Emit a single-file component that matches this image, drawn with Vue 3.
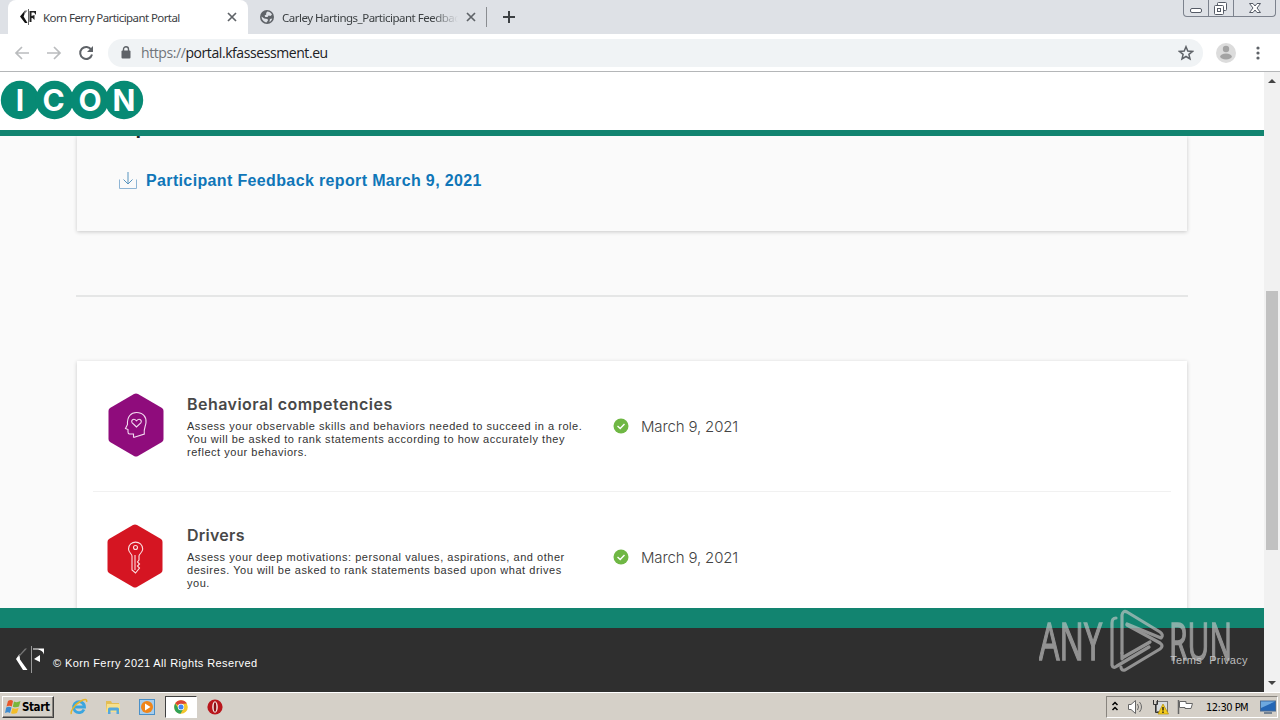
<template>
  <div class="screen">
    <!-- Tab strip -->
    <div class="tab-strip">
      <div class="tab active">
        <svg class="favicon" width="17" height="16" viewBox="0 0 17 16">
          <path d="M5 1.5L0 7.5L5 14H7.500L3.6 7.500L4.500 5Z" fill="#111" />
          <path d="M5 1.500L7.500 1.500L4 5.500Z" fill="#777" />
          <path d="M8.500 0V16" stroke="#666" stroke-width="1" />
          <path d="M9.500 2H16V6L14 3.500H11.500V7L14.500 6V11L12.500 9H11.500V13H9.500Z" fill="#222" />
        </svg>
        <span class="tab-title first">Korn Ferry Participant Portal</span>
        <svg class="tab-close" width="10" height="10" viewBox="0 0 10 10">
          <path d="M1 1L9 9M9 1L1 9" stroke="#5f6368" stroke-width="1.7" />
        </svg>
      </div>
      <div class="tab">
        <svg class="favicon globe" width="14" height="14" viewBox="0 0 14 14">
          <circle cx="7" cy="7" r="7" fill="#5f6368" />
          <path
            d="M7.4 1.6C9 1.6 11 2.6 12 4.5L10.5 6L8.6 5.6L7.6 7H5.3L4.6 5.4L6.3 4.4L6.1 2.9ZM1.6 6.6L4.2 8.6L7.5 9L8 10.5L6.4 12.4C4 12.2 1.5 10 1.6 6.6ZM10 9L12.2 8.4C11.8 10 10.9 11.2 9.4 12Z"
            fill="#dee1e6"
          />
        </svg>
        <span class="tab-title second">Carley Hartings_Participant Feedbac</span>
        <svg class="tab-close" width="10" height="10" viewBox="0 0 10 10">
          <path d="M1 1L9 9M9 1L1 9" stroke="#5f6368" stroke-width="1.7" />
        </svg>
      </div>
      <span class="tab-separator"></span>
      <svg class="new-tab" width="12" height="12" viewBox="0 0 12 12">
        <path d="M6 0V12M0 6H12" stroke="#3c4043" stroke-width="2" />
      </svg>
      <div class="window-buttons">
        <span class="window-button">
          <svg width="24" height="16" viewBox="0 0 24 16">
            <rect x="6.5" y="8.5" width="11" height="4" rx="1.5" fill="#fff" stroke="#555b66" />
          </svg>
        </span>
        <span class="window-button">
          <svg width="24" height="16" viewBox="0 0 24 16">
            <rect x="8.5" y="2.5" width="9" height="8" rx="1" fill="#fff" stroke="#555b66" />
            <rect x="5.5" y="5.5" width="9" height="9" rx="1" fill="#fff" stroke="#555b66" />
            <rect x="8.5" y="8.5" width="3" height="3" fill="#fff" stroke="#555b66" />
          </svg>
        </span>
        <span class="window-button">
          <svg width="41" height="16" viewBox="0 0 41 16">
            <path
              d="M15.5 3.5H19L21 6L23 3.5H26.5L23 8L26.5 12.5H23L21 10L19 12.5H15.5L19 8Z"
              fill="#fff"
              stroke="#555b66"
            />
          </svg>
        </span>
      </div>
    </div>

    <!-- Toolbar -->
    <div class="toolbar">
      <svg class="nav-icon" width="16" height="16" viewBox="0 0 16 16">
        <path d="M15 8H2M8 2L2 8L8 14" fill="none" stroke="#babcbe" stroke-width="1.7" />
      </svg>
      <svg class="nav-icon" width="16" height="16" viewBox="0 0 16 16">
        <path d="M1 8H14M8 2L14 8L8 14" fill="none" stroke="#babcbe" stroke-width="1.7" />
      </svg>
      <svg class="nav-icon" width="16" height="16" viewBox="0 0 16 16">
        <path
          d="M13.3 4.8A6 6 0 1 0 14 9.5"
          fill="none"
          stroke="#5f6368"
          stroke-width="2"
        />
        <path d="M15 1V7H9Z" fill="#5f6368" />
      </svg>
      <div class="address-bar">
        <svg width="10" height="13" viewBox="0 0 10 13">
          <rect x="0.5" y="4.5" width="9" height="8" rx="1" fill="#5f6368" />
          <path d="M2.5 5V3.2A2.5 2.5 0 0 1 7.5 3.2V5" fill="none" stroke="#5f6368" stroke-width="1.4" />
        </svg>
        <span class="url"><span class="scheme">https://</span>portal.kfassessment.eu</span>
        <svg class="star" width="16" height="16" viewBox="0 0 16 16">
          <path
            d="M8 1.7L9.8 6L14.5 6.4L10.9 9.4L12 14L8 11.5L4 14L5.1 9.4L1.5 6.4L6.2 6Z"
            fill="none"
            stroke="#5f6368"
            stroke-width="1.5"
          />
        </svg>
      </div>
      <svg class="avatar" width="20" height="20" viewBox="0 0 20 20">
        <circle cx="10" cy="10" r="10" fill="#dcdcdc" />
        <circle cx="10" cy="6" r="3.2" fill="#a3a3a3" />
        <ellipse cx="10" cy="13.5" rx="5.8" ry="3" fill="#a3a3a3" />
      </svg>
      <svg class="kebab" width="4" height="14" viewBox="0 0 4 14">
        <circle v-for="cy in [2, 7, 12]" :key="cy" cx="2" :cy="cy" r="1.6" fill="#5f6368" />
      </svg>
    </div>

    <!-- Page -->
    <div class="viewport">
      <div class="page">
        <header class="site-header">
          <svg width="144" height="40" viewBox="0 0 144 40">
            <g fill="#078a74">
              <circle v-for="l in logoLetters" :key="l.char" :cx="l.x" cy="20" r="19.2" />
            </g>
            <g class="logo-text">
              <text v-for="l in logoLetters" :key="l.char" :x="l.x + l.dx" y="31">{{ l.char }}</text>
            </g>
          </svg>
        </header>

        <main class="content">
          <section class="card report-card">
            <h2 class="report-heading">Reports</h2>
            <a class="report-link">
              <svg width="18" height="18" viewBox="0 0 18 18">
                <path d="M0.5 7.5V16.5H17.5V7.5" fill="none" stroke="#8fb5d5" />
                <path d="M9 0V11.5M4.5 7.5L9 12L13.5 7.5" fill="none" stroke="#5794bf" />
              </svg>
              <span>Participant Feedback report March 9, 2021</span>
            </a>
          </section>
          <hr class="rule" />
          <section class="card assessments">
            <div v-for="item in assessments" :key="item.title" class="assessment">
              <svg class="hexagon" :class="item.icon" width="56" height="64" viewBox="0 0 56 64">
                <path
                  d="M26 1.1Q28 0 30 1.1L54 15Q55.5 16 55.5 18V46Q55.5 48 54 49L30 62.9Q28 64 26 62.900L2 49Q0.5 48 0.5 46V18Q0.5 16 2 15Z"
                  :fill="item.color"
                />
                <g v-if="item.icon === 'head'" fill="none" stroke="#f4dcf1" stroke-width="1.1">
                  <path
                    d="M25.5 44.5V41H21.5Q20 41 20 39V36.5L17.5 35.5L19.5 31.5C19 23.5 23 19.5 28.5 19.5C35 19.5 38.5 24 38 29.5C37.7 33.5 35.5 35.5 36.3 41L25.5 44.5"
                  />
                  <path
                    d="M28.5 34L24.2 29.8C22.5 27.5 25.5 24.5 28.5 27.8C31.5 24.5 34.5 27.5 32.8 29.8Z"
                  />
                </g>
                <g v-else fill="none" stroke="#fbe0e2" stroke-width="1.1">
                  <circle cx="28.5" cy="23.5" r="2" />
                  <path
                    d="M25 32C25 30 21.5 28.5 21.5 25C21.5 15.8 35.7 15.8 35.7 25C35.7 28.500 32 30 32 32V36L30.5 38L32.5 40L30.5 42L32.5 44L28.5 49L25 46Z"
                  />
                  <path d="M28 31V46" />
                </g>
              </svg>
              <div class="description">
                <h3 :class="item.icon">{{ item.title }}</h3>
                <p>
                  <span v-for="(line, i) in item.lines" :key="i" class="line">{{ line }}</span>
                </p>
              </div>
              <div class="status">
                <svg width="16" height="16" viewBox="0 0 16 16">
                  <circle cx="8" cy="8" r="7.5" fill="#6fb744" />
                  <path d="M4.5 8L7.2 10.5L11.5 6" fill="none" stroke="#fff" stroke-width="1.4" />
                </svg>
                <span>{{ item.date }}</span>
              </div>
            </div>
          </section>
        </main>

        <footer class="site-footer">
          <svg width="28" height="28" viewBox="0 0 28 28">
            <path d="M3.500 8L0 13L7 24H11.5L4 13.5Z" fill="#fff" />
            <path d="M2 10.500L9 2.500L11 2.500L4 10Z" fill="#777" />
            <path d="M15.5 0V27" stroke="#999" />
            <path d="M17 2.5H28V8.5C27 5.5 25.5 4.5 22 3.5H17ZM18 13L24 9V16Z" fill="#fff" />
          </svg>
          <span class="copyright">© Korn Ferry 2021 All Rights Reserved</span>
          <nav class="legal"><a>Terms</a><a>Privacy</a></nav>
        </footer>
      </div>

      <div class="scrollbar">
        <svg width="16" height="16" viewBox="0 0 16 16"><path d="M4 11L8 7L12 11Z" fill="#444" /></svg>
        <div class="track"><div class="thumb"></div></div>
        <svg width="16" height="16" viewBox="0 0 16 16"><path d="M4 5L8 9L12 5Z" fill="#444" /></svg>
      </div>

      <svg class="watermark" width="196" height="64" viewBox="0 0 196 64">
        <g class="watermark-text">
          <text x="0" y="51" textLength="63" lengthAdjust="spacingAndGlyphs">ANY</text>
          <text x="130" y="51" textLength="63" lengthAdjust="spacingAndGlyphs">RUN</text>
        </g>
        <g fill="none" stroke="#c8c8c8" stroke-width="3.2" stroke-linejoin="round" stroke-linecap="round">
          <path d="M77 9Q73 9 73 14V56Q74 60 78 57L110 38" />
          <path d="M83 44V6Q84 1 88 3L121 23Q125 26 122 29L88 15" />
          <path d="M83 44V50M83 49L111 33M88 16L121 34Q125 37 121 40L86 61Q82 62 82 58" />
        </g>
      </svg>
    </div>

    <!-- Taskbar -->
    <div class="taskbar">
      <button class="start">
        <svg width="16" height="16" viewBox="0 0 16 16">
          <path d="M3 2Q6 0 8 2L6.8 7.5Q4.5 6 1.5 7.5Z" fill="#e8572a" />
          <path d="M9 2.5Q12 4 15.5 2L14 7.5Q11 9 7.8 7.7Z" fill="#79b63b" />
          <path d="M1.2 8.5Q4 7 6.5 8.5L5 14Q3 12.5 0 14Z" fill="#3d8bd0" />
          <path d="M7.5 9Q10.5 10.5 13.7 8.7L12 14Q9 15.5 6 14.3Z" fill="#f3bd29" />
        </svg>
        <span>Start</span>
      </button>
      <div class="launchers">
        <span class="launcher">
          <svg width="18" height="18" viewBox="0 0 18 18">
            <path d="M14 11.5A5.5 5.5 0 1 1 14.5 9H5" fill="none" stroke="#3aa5df" stroke-width="2.8" />
            <path d="M1.5 16C0 14 4 7 10 3.5C14 1 17.5 0.5 16.5 4" fill="none" stroke="#e5b52a" stroke-width="1.5" />
          </svg>
        </span>
        <span class="launcher">
          <svg width="18" height="18" viewBox="0 0 18 18">
            <path d="M2 3H7L8 5H15V14H2Z" fill="#e3bd54" />
            <path d="M3 6H16V14H2Z" fill="#f7e08c" />
            <path d="M4 16V11Q4 9.5 5.5 9.5H13.5Q15 9.5 15 11V16H12.5V12.5H6.5V16Z" fill="#55a8dc" />
          </svg>
        </span>
        <span class="launcher">
          <svg width="18" height="18" viewBox="0 0 18 18">
            <rect x="1.5" y="1.5" width="15" height="15" fill="#a7cdec" stroke="#4a90c8" />
            <circle cx="9" cy="9" r="6" fill="#f08519" />
            <path d="M7 5.500L12.500 9L7 12.500Z" fill="#fff" />
          </svg>
        </span>
        <span class="launcher current">
          <svg width="16" height="16" viewBox="0 0 16 16">
            <circle cx="8" cy="8" r="6.8" fill="#f4c62c" />
            <path d="M8 8L2.2 4.5A6.8 6.8 0 0 1 13.8 4.5L8 5Z" fill="#db4437" />
            <path d="M2.2 4.5A6.8 6.8 0 0 0 7.5 14.8L10.5 9.5L5.5 9.5Z" fill="#31a257" />
            <circle cx="8" cy="8" r="3.2" fill="#fff" />
            <circle cx="8" cy="8" r="2.5" fill="#4285f4" />
          </svg>
        </span>
        <span class="launcher">
          <svg width="16" height="16" viewBox="0 0 16 16">
            <circle cx="8" cy="8" r="7.6" fill="#b9161c" />
            <ellipse cx="8" cy="8" rx="2.8" ry="5.8" fill="#f6e9e6" />
            <ellipse cx="8" cy="8" rx="1.3" ry="4.8" fill="#8c1015" />
          </svg>
        </span>
      </div>
      <div class="tray">
        <svg width="8" height="12" viewBox="0 0 8 12">
          <path d="M1.5 4L4 1.5L6.5 4M1.5 9L4 6.5L6.5 9" fill="none" stroke="#000" stroke-width="1.5" />
        </svg>
        <svg width="17" height="16" viewBox="0 0 17 16">
          <path d="M1.5 5.5H4L8.5 1.5V14.5L4 10.5H1.5Z" fill="#fff" stroke="#666" />
          <path d="M10.500 5Q12.500 8 10.500 11M12.500 3Q16.500 8 12.500 13" fill="none" stroke="#666" />
        </svg>
        <svg width="17" height="16" viewBox="0 0 17 16">
          <rect x="4.5" y="2.500" width="11" height="10" fill="#d9dde0" stroke="#777" />
          <path d="M1.5 1V5.5H5.5V1M3.5 5V13.5H7" fill="none" stroke="#333" />
          <path d="M11 5L16.5 15H6Z" fill="#f5cc1d" stroke="#b58f00" stroke-width="0.7" />
          <path d="M11 8V11.5M11 12.5V14" stroke="#111" stroke-width="1.3" />
        </svg>
        <svg width="17" height="16" viewBox="0 0 17 16">
          <path d="M1.5 1V15" stroke="#666" stroke-width="1.5" />
          <path d="M2.5 2.5H9V4.5H15.5L14 9.5H8V8.5H2.5Z" fill="#fff" stroke="#666" />
        </svg>
        <span class="clock">12:30 PM</span>
        <svg width="16" height="14" viewBox="0 0 16 14">
          <rect x="0.5" y="1" width="15" height="10" fill="#2466b5" stroke="#4a6b92" />
          <path d="M1 1.5H15L1 8Z" fill="#6da8df" />
          <path d="M4 13H12" stroke="#556a80" stroke-width="1.5" />
        </svg>
      </div>
    </div>
  </div>
</template>

<script setup>
const logoLetters = [
  { char: 'I', x: 20, dx: 0 },
  { char: 'C', x: 54.5, dx: -1 },
  { char: 'O', x: 89.5, dx: 0.5 },
  { char: 'N', x: 124, dx: 0 },
]

const assessments = [
  {
    title: 'Behavioral competencies',
    icon: 'head',
    color: '#8f0c7c',
    lines: [
      'Assess your observable skills and behaviors needed to succeed in a role.',
      'You will be asked to rank statements according to how accurately they',
      'reflect your behaviors.',
    ],
    date: 'March 9, 2021',
  },
  {
    title: 'Drivers',
    icon: 'key',
    color: '#d51522',
    lines: [
      'Assess your deep motivations: personal values, aspirations, and other',
      'desires. You will be asked to rank statements based upon what drives',
      'you.',
    ],
    date: 'March 9, 2021',
  },
]
</script>

<style>
body {
  margin: 0;
  overflow: hidden;
}
</style>

<style scoped>
.screen {
  display: flex;
  flex-direction: column;
  width: 1280px;
  height: 720px;
  overflow: hidden;
  background: #fff;
  font-family: 'Liberation Sans', Arial, sans-serif;
}

svg {
  display: block;
  flex: none;
}

/* Browser chrome */
.tab-strip {
  display: flex;
  align-items: center;
  flex: none;
  height: 34px;
  background: #dee1e6;
  font-family: 'Noto Sans', sans-serif;
  font-size: 11.5px;
  color: #3c4043;
}

.tab {
  display: flex;
  align-items: center;
  box-sizing: border-box;
  width: 239px;
  height: 34px;
  padding: 0 11px 0 12px;
}

.tab.active {
  width: 240px;
  margin-left: 8px;
  border-radius: 8px 8px 0 0;
  background: #fff;
}

.favicon {
  margin-right: 6px;
}

.globe {
  margin-right: 8px;
}

.tab-title {
  overflow: hidden;
  white-space: nowrap;
}

.tab-title.first {
  letter-spacing: -0.58px;
}

.tab-title.second {
  width: 176px;
  letter-spacing: -0.5px;
  mask-image: linear-gradient(to right, #000 150px, transparent 176px);
}

.tab-close {
  margin-left: auto;
}

.tab-separator {
  width: 1px;
  height: 20px;
  margin: 0 16px 0 -1px;
  background: #8a8d91;
}

.window-buttons {
  display: flex;
  align-self: flex-start;
  box-sizing: border-box;
  height: 17px;
  margin-left: auto;
  margin-right: 4px;
  border: 1px solid #7c828d;
  border-top: 0;
  border-radius: 0 0 4px 4px;
}

.window-button + .window-button {
  border-left: 1px solid #7c828d;
}

.toolbar {
  display: flex;
  align-items: center;
  box-sizing: border-box;
  flex: none;
  height: 38px;
  padding: 0 20px 0 14px;
  border-bottom: 1px solid #b4b6b8;
}

.nav-icon {
  margin-right: 16px;
}

.address-bar {
  display: flex;
  align-items: center;
  box-sizing: border-box;
  width: 1095px;
  height: 28px;
  margin-left: -2px;
  padding: 0 9px 0 13px;
  border-radius: 14px;
  background: #f0f3f5;
}

.url {
  margin-left: 10px;
  font-family: 'Open Sans', sans-serif;
  font-size: 14px;
  letter-spacing: -0.42px;
  color: #202124;
}

.scheme {
  color: #70757a;
}

.star {
  margin-left: auto;
}

.avatar {
  margin-left: 13px;
}

.kebab {
  margin-left: auto;
}

/* Page */
.viewport {
  display: flex;
  position: relative;
  flex: none;
  height: 620px;
}

.page {
  display: flex;
  flex-direction: column;
  width: 1264px;
  height: 620px;
}

.site-header {
  box-sizing: border-box;
  flex: none;
  height: 64px;
  padding-top: 8px;
  border-bottom: 6px solid #128470;
  background: #fff;
}

.logo-text {
  fill: #fff;
  font-family: Inter, sans-serif;
  font-size: 30px;
  font-weight: 700;
  text-anchor: middle;
}

.content {
  flex: none;
  height: 472px;
  padding: 0 77px;
  background: #fafafa;
  overflow: hidden;
}

.card {
  box-shadow: 0 1px 4px rgba(0, 0, 0, 0.2);
}

.report-card {
  box-sizing: border-box;
  height: 95px;
  padding-left: 42px;
  overflow: hidden;
}

.report-heading {
  height: 35px;
  margin: -22px 0 22px -9px;
  font-size: 20px;
  line-height: 27px;
  color: #222;
}

.report-link {
  display: flex;
  align-items: center;
  gap: 9px;
  height: 19px;
  font-size: 16px;
  font-weight: bold;
  letter-spacing: 0.36px;
  color: #0f76b8;
}

.rule {
  height: 2px;
  margin: 64px -1px;
  border: 0;
  background: #e5e6e6;
}

.assessments {
  height: 300px;
  padding: 0 16px;
  background: #fff;
}

.assessment {
  display: flex;
  box-sizing: border-box;
  height: 131px;
  padding: 32px 0 0 15px;
  border-bottom: 1px solid #f1f1f1;
}

.hexagon.key {
  margin: 0 1px 0 -1px;
}

.description {
  width: 427px;
  margin-left: 23px;
}

.description h3 {
  margin: 0;
  font-family: Inter, sans-serif;
  font-size: 16px;
  font-weight: 600;
  line-height: 22px;
  letter-spacing: 0.46px;
  color: #484848;
}

.description h3.key {
  letter-spacing: 0.25px;
}

.description p {
  margin: 5px 0 0;
  font-size: 11px;
  line-height: 13px;
  letter-spacing: 0.53px;
  color: #333;
}

.line {
  display: block;
  white-space: nowrap;
}

.status {
  display: flex;
  align-items: center;
  gap: 12px;
  height: 20px;
  margin: 23px 0 0 -1px;
  font-family: Inter, sans-serif;
  font-size: 15px;
  font-weight: 300;
  letter-spacing: -0.15px;
  color: #444;
}

.site-footer {
  display: flex;
  align-items: center;
  box-sizing: border-box;
  flex: none;
  height: 84px;
  padding: 0 16px;
  border-top: 20px solid #128470;
  background: #2f2f2f;
  color: #fff;
  font-size: 11px;
}

.copyright {
  margin: 6px 0 0 9px;
  letter-spacing: 0.4px;
}

.legal {
  display: flex;
  gap: 7px;
  margin-left: auto;
  letter-spacing: 0.4px;
  color: #bdbdbd;
}

.scrollbar {
  display: flex;
  flex-direction: column;
  width: 16px;
  background: #f1f1f1;
}

.track {
  flex: 1;
  padding: 203px 2px 0;
}

.thumb {
  height: 259px;
  background: #c1c1c1;
}

.watermark {
  position: absolute;
  left: 1039px;
  top: 537px;
  opacity: 0.65;
}

.watermark-text {
  fill: #c8c8c8;
  stroke: #c8c8c8;
  stroke-width: 1.5px;
  font-family: 'Open Sans', sans-serif;
  font-size: 52px;
}

/* Taskbar */
.taskbar {
  display: flex;
  align-items: center;
  box-sizing: border-box;
  flex: none;
  height: 28px;
  padding: 1px 2px 0;
  border-top: 1px solid #fff;
  background: #d5d0c8;
}

.start {
  display: flex;
  align-items: center;
  gap: 1px;
  box-sizing: border-box;
  width: 52px;
  height: 22px;
  padding: 0 2px;
  border: 1px solid;
  border-color: #fff #404040 #404040 #fff;
  box-shadow: inset -1px -1px #88847e;
  background: #d5d0c8;
  font-family: 'DejaVu Sans Condensed', sans-serif;
  font-size: 11.5px;
  font-weight: bold;
  letter-spacing: -0.4px;
  color: #000;
}

.launchers {
  display: flex;
  margin-left: 9px;
}

.launcher {
  display: flex;
  align-items: center;
  justify-content: center;
  box-sizing: border-box;
  width: 32px;
  height: 22px;
  margin-right: 2px;
}

.launcher.current {
  border: 1px solid;
  border-color: #404040 #fff #fff #404040;
  background: #fff;
}

.tray {
  display: flex;
  align-items: center;
  box-sizing: border-box;
  width: 172px;
  height: 22px;
  margin-left: auto;
  padding: 0 1px 0 4px;
  gap: 8px;
  border: 1px solid;
  border-color: #88847e #fff #fff #88847e;
}

.clock {
  margin-left: 4px;
  margin-right: auto;
  font-family: 'DejaVu Sans Condensed', sans-serif;
  font-size: 11px;
  letter-spacing: -0.5px;
  white-space: nowrap;
}
</style>
